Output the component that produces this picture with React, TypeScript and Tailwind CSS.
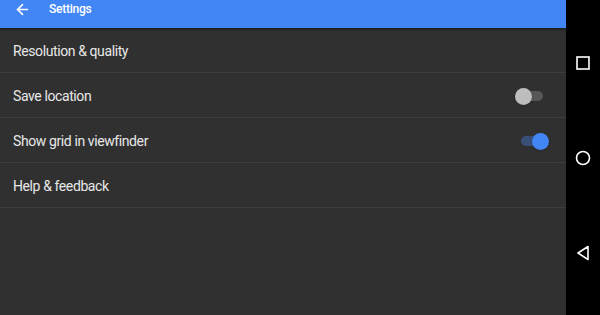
import { ArrowLeft } from "lucide-react";

const rows = [
  { label: "Resolution & quality" },
  { label: "Save location", toggle: false },
  { label: "Show grid in viewfinder", toggle: true },
  { label: "Help & feedback" },
];

const Toggle = ({ on }: { on: boolean }) => (
  <div className="relative w-[34px] h-[18px] flex items-center">
    <div
      className={
        on
          ? "absolute left-[6px] w-[22px] h-[10px] rounded-full bg-[#3a4f78]"
          : "absolute left-[6px] w-[22px] h-[10px] rounded-full bg-[#575757]"
      }
    />
    <div
      className={
        on
          ? "absolute left-[17px] w-[17px] h-[17px] rounded-full bg-[#4285f4] shadow"
          : "absolute left-[0px] w-[17px] h-[17px] rounded-full bg-[#bdbdbd] shadow"
      }
    />
  </div>
);

export default function App() {
  return (
    <div className="flex w-[600px] h-[315px] bg-[#303030] font-['Roboto',sans-serif] overflow-hidden">
      <div className="flex flex-col w-[566px]">
        <div className="h-[28px] bg-[#4285f4] flex items-start pl-[14px] pt-[1px] shadow-[0_1px_3px_rgba(0,0,0,0.6)] relative z-10">
          <div className="h-[16px] flex items-center">
            <ArrowLeft size={17} strokeWidth={2.4} className="text-white" />
            <span className="ml-[18px] text-white text-[12px] font-medium tracking-[-0.25px]">Settings</span>
          </div>
        </div>
        {rows.map((r) => (
          <div
            key={r.label}
            className="h-[45px] flex items-center justify-between pl-[13px] pr-[17px] pt-[2px] border-b border-[#3d3d3d]"
          >
            <span className="text-[14px] text-[#e8e8e8] tracking-[-0.4px]">{r.label}</span>
            {r.toggle !== undefined && <Toggle on={r.toggle} />}
          </div>
        ))}
      </div>
      <div className="flex-1 bg-black flex flex-col items-center justify-between pt-[56px] pb-[54px]">
        <svg width="14" height="14" viewBox="0 0 14 14">
          <rect x="1" y="1" width="12" height="12" fill="none" stroke="white" strokeWidth="1.6" />
        </svg>
        <svg width="16" height="16" viewBox="0 0 16 16">
          <circle cx="8" cy="8" r="6.5" fill="none" stroke="white" strokeWidth="1.6" />
        </svg>
        <svg width="14" height="16" viewBox="0 0 14 16">
          <path d="M12 1.5 L2 8 L12 14.5 Z" fill="none" stroke="white" strokeWidth="1.6" strokeLinejoin="round" />
        </svg>
      </div>
    </div>
  );
}
